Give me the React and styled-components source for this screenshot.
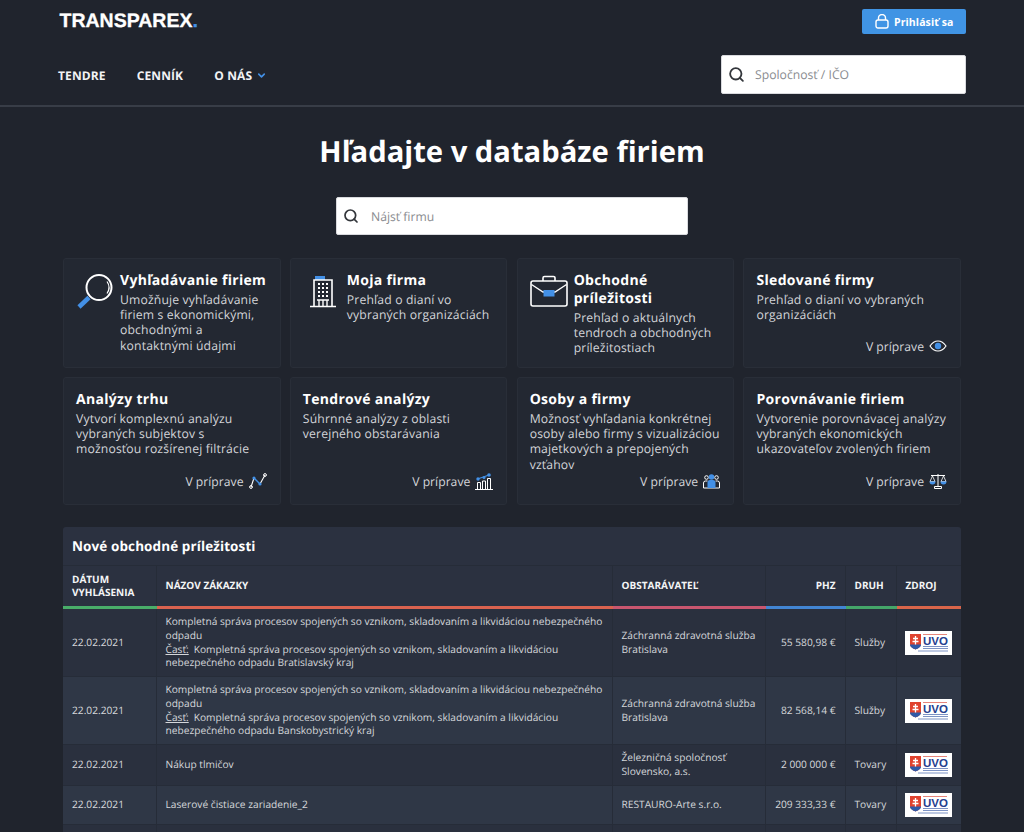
import React from 'react';
import styled, { createGlobalStyle } from 'styled-components';
import { ChevronDown, Search } from 'lucide-react';

const GlobalStyle = createGlobalStyle`
  html, body {
    margin: 0;
    padding: 0;
    background: #20242d;
    height: 832px;
    overflow: hidden;
  }
  * { box-sizing: border-box; }
  body {
    font-family: 'Open Sans', 'Noto Sans', sans-serif;
    color: #fff;
    text-rendering: geometricPrecision;
  }
`;

const BLUE = '#4390e6';

const LupaIcon = () => (
  <svg width="38" height="36" viewBox="0 0 38 36" fill="none">
    <path d="M3 33l10-9.500" stroke={BLUE} strokeWidth="4.500" />
    <circle cx="23" cy="13.500" r="12.500" stroke="#fff" strokeWidth="2" />
    <path d="M31 7.500a10.500 10.500 0 0 1 0 12" stroke="#fff" strokeWidth="1.200" />
  </svg>
);

const BuildingIcon = () => (
  <svg width="26" height="32" viewBox="0 0 26 32" fill="none">
    <rect x="5" y="0" width="10" height="4" fill={BLUE} />
    <path d="M4 30V4h18v26M0 30.500h26" stroke="#fff" strokeWidth="1.600" />
    <path d="M8 8h2M12 8h2M16 8h2M8 12h2M12 12h2M16 12h2M8 16h2M12 16h2M16 16h2M8 20h2M12 20h2M16 20h2" stroke="#fff" strokeWidth="1.800" />
    <path d="M7 24h12M9 24v6M17 24v6M13 24v6" stroke="#fff" strokeWidth="1.400" />
  </svg>
);

const CaseIcon = () => (
  <svg width="38" height="32" viewBox="0 0 38 32" fill="none">
    <path d="M13 6V3a1.500 1.500 0 0 1 1.500-1.500h9A1.500 1.500 0 0 1 25 3v3" stroke="#fff" strokeWidth="1.600" />
    <rect x="1" y="6" width="36" height="25" rx="2" stroke="#fff" strokeWidth="1.600" />
    <path d="M1.500 9.500L13 17h12l11.500-7.500" stroke="#fff" strokeWidth="1.400" />
    <rect x="13.500" y="15" width="11" height="6.500" fill={BLUE} />
  </svg>
);

const EyeIcon = () => (
  <svg width="18" height="12" viewBox="0 0 18 12" fill="none">
    <path d="M1 6c2-3 5-5 8-5s6 2 8 5c-2 3-5 5-8 5S3 9 1 6z" stroke="#fff" strokeWidth="1.200" />
    <circle cx="9" cy="6" r="3.200" fill={BLUE} />
  </svg>
);

const LineIcon = () => (
  <svg width="18" height="16" viewBox="0 0 18 16" fill="none">
    <path d="M2 14l3-9M11 11l5-9" stroke="#fff" strokeWidth="1.100" />
    <path d="M5 5l6 6" stroke={BLUE} strokeWidth="1.400" />
    <circle cx="2" cy="14" r="1.400" stroke="#fff" />
    <circle cx="5" cy="5" r="1.600" fill={BLUE} />
    <circle cx="11" cy="11" r="1.600" fill={BLUE} />
    <circle cx="16" cy="2" r="1.400" stroke="#fff" />
  </svg>
);

const BarsIcon = () => (
  <svg width="18" height="17" viewBox="0 0 18 17" fill="none">
    <path d="M0 16.500h18" stroke="#fff" strokeWidth="1" />
    <path d="M2.500 16V9.500h3V16M7.500 16V8h3v8M12.500 16V5.500h3V16" stroke="#fff" strokeWidth="1" />
    <path d="M2.500 6L14 2" stroke={BLUE} strokeWidth="1.200" />
    <circle cx="3" cy="6" r="1.700" fill={BLUE} />
    <circle cx="9" cy="4.500" r="1.500" fill={BLUE} />
    <circle cx="14" cy="2" r="1.800" fill={BLUE} />
  </svg>
);

const PeopleIcon = () => (
  <svg width="17" height="15" viewBox="0 0 17 15" fill="none">
    <circle cx="3.500" cy="3.500" r="1.800" stroke="#fff" />
    <circle cx="13.500" cy="3.500" r="1.800" stroke="#fff" />
    <path d="M.5 14V9a2 2 0 0 1 2-2h2M16.500 14V9a2 2 0 0 0-2-2h-2M.5 14h16" stroke="#fff" />
    <circle cx="8.500" cy="3" r="2.800" fill={BLUE} />
    <path d="M4.500 14V8.500a2.500 2.500 0 0 1 2.500-2.500h3a2.500 2.500 0 0 1 2.500 2.500V14z" fill={BLUE} />
  </svg>
);

const ScalesIcon = () => (
  <svg width="18" height="17" viewBox="0 0 18 17" fill="none">
    <path d="M2 2.500h14M9 1v12M5.500 15.500h7v-2h-7z" stroke="#fff" strokeWidth="1" />
    <path d="M3.500 3L1 8.500h5zM14.500 3L12 8.500h5z" stroke="#fff" strokeWidth=".8" />
    <path d="M.5 8.500h6a3 3 0 0 1-6 0zM11.500 8.500h6a3 3 0 0 1-6 0z" fill={BLUE} />
  </svg>
);

const LockIcon = () => (
  <svg width="14" height="15" viewBox="0 0 14 15" fill="none">
    <rect x="1" y="6" width="12" height="8" rx="2" stroke="#fff" strokeWidth="1.400" />
    <path d="M3.500 6V4a3.500 3.500 0 0 1 7 0v2" stroke="#fff" strokeWidth="1.400" />
  </svg>
);

const UvoLogo = () => (
  <svg width="47" height="24" viewBox="0 0 47 24">
    <rect width="47" height="24" fill="#fff" />
    <path d="M5 3h11v10c0 3-3 4.500-5.500 5.500C8 17.500 5 16 5 13z" fill="#e0432f" />
    <path d="M5 13.500h11c0 2.500-3 4-5.500 5-2.500-1-5.500-2.500-5.500-5z" fill="#2f5aa8" />
    <path d="M10.500 5v8.500M8 7.500h5M7.500 10.500h6" stroke="#fff" strokeWidth="1.300" />
    <path d="M18 3.500h24" stroke="#e0675a" strokeWidth=".8" />
    <text x="18" y="13.500" fontFamily="Liberation Sans" fontWeight="700" fontSize="11.500" fill="#25408f">UVO</text>
    <path d="M18 15.500h25M18 17.500h25M13 20h30" stroke="#7d93c5" strokeWidth="1" />
  </svg>
);

const TopBar = styled.div`
  height: 105px;
  padding: 9px 58px 0;
`;

const BrandRow = styled.div`
  display: flex;
  justify-content: space-between;
  align-items: flex-start;
  height: 46px;
`;

const Logo = styled.div`
  font-family: 'Liberation Sans', Arial, sans-serif;
  font-weight: 700;
  font-size: 19.500px;
  line-height: 24px;
  margin-left: 1.500px;
  -webkit-text-stroke: 0.3px #fff;
  span {
    color: ${BLUE};
    -webkit-text-stroke: 0.3px ${BLUE};
  }
`;

const LoginButton = styled.button`
  display: flex;
  align-items: center;
  gap: 5px;
  width: 104px;
  height: 25px;
  padding: 0 0 0 13px;
  border: none;
  border-radius: 2px;
  background: #4094e4;
  color: #fff;
  font: 700 10.500px 'Open Sans', sans-serif;
  letter-spacing: 0.1px;
`;

const NavRow = styled.div`
  display: flex;
  justify-content: space-between;
  align-items: center;
`;

const Nav = styled.nav`
  display: flex;
  gap: 31px;
  padding-top: 1px;
`;

const NavItem = styled.a`
  display: flex;
  align-items: center;
  gap: 4px;
  font-weight: 700;
  font-size: 12px;
  letter-spacing: 0.12px;
  text-transform: uppercase;
  color: #f2f3f5;
`;

const SearchBox = styled.div`
  display: flex;
  align-items: center;
  width: ${p => p.$width}px;
  height: ${p => p.$height}px;
  background: #fff;
  border: 1px solid #d9dade;
  border-radius: 2px;
  padding-left: 6px;
  gap: ${p => p.$gap}px;
  color: #33363b;
`;

const SearchText = styled.span`
  font-size: 12.200px;
  color: #8a8c90;
`;

const Divider = styled.div`
  height: 2px;
  background: #383d47;
`;

const Main = styled.main`
  padding: 0 63px;
`;

const Heading = styled.h1`
  margin: 0;
  padding-top: 24px;
  height: 90px;
  text-align: center;
  font-size: 29.200px;
  line-height: 40px;
  font-weight: 700;
`;

const CenterSearch = styled.div`
  display: flex;
  justify-content: center;
  margin-bottom: 23px;
`;

const CardGrid = styled.div`
  display: grid;
  grid-template-columns: repeat(4, 217.500px);
  grid-template-rows: 110px 128px;
  justify-content: space-between;
  row-gap: 9px;
  margin-bottom: 22px;
`;

const Card = styled.div`
  display: flex;
  flex-direction: column;
  background: #232832;
  border: 1px solid #292e38;
  border-radius: 3px;
  padding: 13px 13px 12px 12px;
  &:nth-child(n+5) { padding-bottom: 14px; }
`;

const CardBody = styled.div`
  display: flex;
  align-items: flex-start;
  flex: 1;
`;

const IconSlot = styled.div`
  flex: 0 0 44px;
  padding-top: ${p => p.$top}px;
  padding-left: ${p => p.$left || 0}px;
  display: flex;
`;

const CardTitle = styled.h3`
  margin: 0 0 2px;
  font-size: 14px;
  line-height: 18px;
  font-weight: 700;
  letter-spacing: 0.3px;
`;

const CardText = styled.p`
  margin: 0;
  font-size: 12.200px;
  line-height: 15.200px;
  letter-spacing: 0.15px;
  color: #d3d5d9;
`;

const CardFoot = styled.div`
  display: flex;
  justify-content: flex-end;
  align-items: center;
  gap: 5px;
  height: 18px;
  font-size: 12.200px;
  color: #d3d5d9;
`;

const Panel = styled.section`
  background: #2b3140;
  border-radius: 3px 3px 0 0;
`;

const PanelTitle = styled.h2`
  margin: 0;
  height: 38px;
  padding: 0 9px;
  font-size: 13.500px;
  line-height: 38px;
  font-weight: 700;
  letter-spacing: 0.1px;
`;

const Table = styled.table`
  width: 100%;
  table-layout: fixed;
  border-collapse: collapse;
`;

const Th = styled.th`
  height: 42px;
  padding: 0 9px;
  font-size: 10px;
  line-height: 13.500px;
  font-weight: 700;
  text-transform: uppercase;
  text-align: ${p => p.$right ? 'right' : 'left'};
  color: #f4f5f6;
  border-left: 1px solid #262c38;
  border-top: 1px solid #262c38;
  border-bottom: 3px solid ${p => p.$line};
  &:first-child { border-left: none; }
`;

const Row = styled.tr`
  background: ${p => p.$alt ? '#2f3746' : '#2a303e'};
`;

const Td = styled.td`
  padding: 6px 9px;
  font-size: 10.200px;
  line-height: 13.750px;
  color: #d5d7db;
  white-space: ${p => p.$right ? 'nowrap' : 'normal'};
  text-align: ${p => p.$right ? 'right' : 'left'};
  border-left: 1px solid #262c38;
  border-bottom: 1px solid #262c38;
  &:first-child { border-left: none; }
`;

const PartLabel = styled.u`
  margin-right: 5px;
`;

const LogoCell = styled.div`
  display: flex;
  align-items: center;
  height: 26px;
  margin-left: -1px;
  line-height: 0;
`;

const cards = [
  { title: 'Vyhľadávanie firiem', text: 'Umožňuje vyhľadávanie firiem s ekonomickými, obchodnými a kontaktnými údajmi', icon: <LupaIcon />, top: 2 },
  { title: 'Moja firma', text: 'Prehľad o dianí vo vybraných organizáciách', icon: <BuildingIcon />, top: 4, left: 7 },
  { title: 'Obchodné príležitosti', text: 'Prehľad o aktuálnych tendroch a obchodných príležitostiach', icon: <CaseIcon />, top: 3 },
  { title: 'Sledované firmy', text: 'Prehľad o dianí vo vybraných organizáciách', foot: <EyeIcon /> },
  { title: 'Analýzy trhu', text: 'Vytvorí komplexnú analýzu vybraných subjektov s možnosťou rozšírenej filtrácie', foot: <LineIcon /> },
  { title: 'Tendrové analýzy', text: 'Súhrnné analýzy z oblasti verejného obstarávania', foot: <BarsIcon /> },
  { title: 'Osoby a firmy', text: 'Možnosť vyhľadania konkrétnej osoby alebo firmy s vizualizáciou majetkových a prepojených vzťahov', foot: <PeopleIcon /> },
  { title: 'Porovnávanie firiem', text: 'Vytvorenie porovnávacej analýzy vybraných ekonomických ukazovateľov zvolených firiem', foot: <ScalesIcon /> },
];

const columns = [
  { label: <>Dátum<br />vyhlásenia</>, width: 93, line: '#49ad69' },
  { label: 'Názov zákazky', width: 456, line: '#d9624f' },
  { label: 'Obstarávateľ', width: 153, line: '#c9566f' },
  { label: 'PHZ', width: 80, line: '#4285d3', right: true },
  { label: 'Druh', width: 51, line: '#44a669' },
  { label: 'Zdroj', width: 65, line: '#d9654a' },
];

const MAIN_NAME = 'Kompletná správa procesov spojených so vznikom, skladovaním a likvidáciou nebezpečného odpadu';

const rows = [
  { name: MAIN_NAME, part: 'Kompletná správa procesov spojených so vznikom, skladovaním a likvidáciou nebezpečného odpadu Bratislavský kraj', buyer: 'Záchranná zdravotná služba Bratislava', price: '55 580,98 €', kind: 'Služby' },
  { name: MAIN_NAME, part: 'Kompletná správa procesov spojených so vznikom, skladovaním a likvidáciou nebezpečného odpadu Banskobystrický kraj', buyer: 'Záchranná zdravotná služba Bratislava', price: '82 568,14 €', kind: 'Služby' },
  { name: 'Nákup tlmičov', buyer: 'Železničná spoločnosť Slovensko, a.s.', price: '2 000 000 €', kind: 'Tovary' },
  { name: 'Laserové čistiace zariadenie_2', buyer: 'RESTAURO-Arte s.r.o.', price: '209 333,33 €', kind: 'Tovary' },
];

export default function App() {
  return (
    <>
      <GlobalStyle />
      <TopBar>
        <BrandRow>
          <Logo>TRANSPAREX<span>.</span></Logo>
          <LoginButton><LockIcon />Prihlásiť sa</LoginButton>
        </BrandRow>
        <NavRow>
          <Nav>
            <NavItem>Tendre</NavItem>
            <NavItem>Cenník</NavItem>
            <NavItem>O nás<ChevronDown size={11} color={BLUE} strokeWidth={3.5} /></NavItem>
          </Nav>
          <SearchBox $width={245} $height={39} $gap={10}>
            <Search size={17} strokeWidth={2.6} />
            <SearchText>Spoločnosť / IČO</SearchText>
          </SearchBox>
        </NavRow>
      </TopBar>
      <Divider />
      <Main>
        <Heading>Hľadajte v databáze firiem</Heading>
        <CenterSearch>
          <SearchBox $width={352} $height={38} $gap={12}>
            <Search size={16} strokeWidth={2.6} />
            <SearchText>Nájsť firmu</SearchText>
          </SearchBox>
        </CenterSearch>
        <CardGrid>
          {cards.map(card => (
            <Card key={card.title}>
              <CardBody>
                {card.icon && <IconSlot $top={card.top} $left={card.left}>{card.icon}</IconSlot>}
                <div>
                  <CardTitle>{card.title}</CardTitle>
                  <CardText>{card.text}</CardText>
                </div>
              </CardBody>
              {card.foot && <CardFoot>V príprave {card.foot}</CardFoot>}
            </Card>
          ))}
        </CardGrid>
        <Panel>
          <PanelTitle>Nové obchodné príležitosti</PanelTitle>
          <Table>
            <colgroup>
              {columns.map((col, i) => <col key={i} width={col.width} />)}
            </colgroup>
            <thead>
              <tr>
                {columns.map((col, i) => <Th key={i} $line={col.line} $right={col.right}>{col.label}</Th>)}
              </tr>
            </thead>
            <tbody>
              {rows.map((row, i) => (
                <Row key={i} $alt={i % 2 === 1}>
                  <Td>22.02.2021</Td>
                  <Td>
                    {row.name}
                    {row.part && <><br /><PartLabel>Časť:</PartLabel>{row.part}</>}
                  </Td>
                  <Td>{row.buyer}</Td>
                  <Td $right>{row.price}</Td>
                  <Td>{row.kind}</Td>
                  <Td><LogoCell><UvoLogo /></LogoCell></Td>
                </Row>
              ))}
              <Row>
                <Td>&nbsp;</Td><Td /><Td /><Td /><Td /><Td />
              </Row>
            </tbody>
          </Table>
        </Panel>
      </Main>
    </>
  );
}
